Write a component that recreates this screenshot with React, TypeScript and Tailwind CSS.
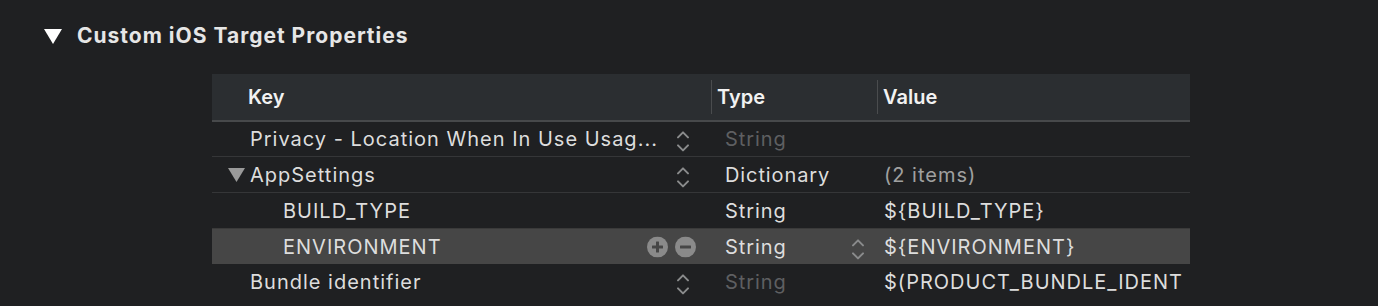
import React from "react";

const font = { fontFamily: "Inter, 'Noto Sans', sans-serif" };

function Stepper({ className = "" }: { className?: string }) {
  return (
    <svg width="14" height="24" viewBox="0 0 14 24" className={className}>
      <path d="M2 8 L7 3 L12 8" fill="none" stroke="#8a8b8c" strokeWidth="2" strokeLinecap="round" strokeLinejoin="round" />
      <path d="M2 16 L7 21 L12 16" fill="none" stroke="#8a8b8c" strokeWidth="2" strokeLinecap="round" strokeLinejoin="round" />
    </svg>
  );
}

function PlusMinus() {
  return (
    <div className="flex items-center gap-[7px]">
      <svg width="21" height="21" viewBox="0 0 21 21">
        <circle cx="10.5" cy="10.5" r="10.5" fill="#8a8a8a" />
        <rect x="5" y="9" width="11" height="3" rx="0.5" fill="#464646" />
        <rect x="9" y="5" width="3" height="11" rx="0.5" fill="#464646" />
      </svg>
      <svg width="21" height="21" viewBox="0 0 21 21">
        <circle cx="10.5" cy="10.5" r="10.5" fill="#8a8a8a" />
        <rect x="5" y="9" width="11" height="3" rx="0.5" fill="#464646" />
      </svg>
    </div>
  );
}

type RowProps = {
  keyText: string;
  indent?: boolean;
  triangle?: boolean;
  keyStepper?: boolean;
  plusMinus?: boolean;
  type: string;
  typeDim?: boolean;
  typeStepper?: boolean;
  value?: string;
  valueDim?: boolean;
  selected?: boolean;
  h: string;
  border?: boolean;
};

function Row(p: RowProps) {
  return (
    <div
      className={`flex ${p.h} ${p.border ? "border-b border-[#353638]" : ""} ${
        p.selected ? "bg-[#464646] border-t border-[#3a3a3a]" : ""
      }`}
    >
      <div className="w-[499px] flex items-center relative">
        {p.triangle && (
          <svg width="17" height="14" viewBox="0 0 17 14" className="absolute left-[16px] top-1/2 -translate-y-1/2">
            <path d="M0 0 L17 0 L8.5 14 Z" fill="#9a9a9a" />
          </svg>
        )}
        <span
          className={`${p.indent ? "pl-[71px]" : "pl-[38px]"} text-[20px] tracking-[1px] text-[#dddddd] whitespace-nowrap flex-1`}
        >
          {p.keyText}
        </span>
        {p.plusMinus && (
          <div className="absolute left-[435px] top-1/2 -translate-y-1/2">
            <PlusMinus />
          </div>
        )}
        {p.keyStepper && (
          <div className="absolute left-[464px] top-1/2 -translate-y-[40%]">
            <Stepper />
          </div>
        )}
      </div>
      <div className="w-[166px] flex items-center relative">
        <span className={`pl-[14px] text-[20px] tracking-[0.9px] ${p.typeDim ? "text-[#5e5f61]" : "text-[#dddddd]"}`}>
          {p.type}
        </span>
        {p.typeStepper && (
          <div className="absolute left-[140px] top-1/2 -translate-y-[40%]">
            <Stepper />
          </div>
        )}
      </div>
      <div className="w-[313px] flex items-center overflow-hidden">
        <span
          className={`pl-[7px] text-[20px] tracking-[1px] whitespace-nowrap ${
            p.valueDim ? "text-[#a0a0a0]" : "text-[#dddddd]"
          }`}
        >
          {p.value}
        </span>
      </div>
    </div>
  );
}

export default function App() {
  return (
    <div className="w-[1378px] h-[306px] bg-[#1f2022] overflow-hidden" style={font}>
      <div className="flex items-center pl-[44px] pt-[23px] h-[49px]">
        <svg width="18" height="15" viewBox="0 0 18 15">
          <path d="M0 0 L18 0 L9 15 Z" fill="#ffffff" />
        </svg>
        <span className="ml-[15px] text-[21px] tracking-[1px] font-bold text-[#e6e6e6]">
          Custom iOS Target Properties
        </span>
      </div>
      <div className="ml-[212px] mt-[25px] w-[978px]">
        <div className="flex h-[48px] bg-[#2b2e31] border-b-2 border-[#47494b]">
          <div className="w-[499px] flex items-center">
            <span className="pl-[36px] text-[20px] font-semibold text-[#f2f2f2]">Key</span>
          </div>
          <div className="w-[166px] flex items-center border-l border-[#4a4c4e] my-[6px]">
            <span className="pl-[5px] text-[20px] font-semibold text-[#f2f2f2]">Type</span>
          </div>
          <div className="w-[313px] flex items-center border-l border-[#4a4c4e] my-[6px]">
            <span className="pl-[5px] text-[20px] font-semibold text-[#f2f2f2]">Value</span>
          </div>
        </div>
        <Row h="h-[35px]" border keyText="Privacy - Location When In Use Usag..." keyStepper type="String" typeDim />
        <Row h="h-[36px]" border keyText="AppSettings" triangle keyStepper type="Dictionary" value="(2 items)" valueDim />
        <Row h="h-[35px]" indent keyText="BUILD_TYPE" type="String" value="${BUILD_TYPE}" />
        <Row h="h-[36px]" indent selected plusMinus keyText="ENVIRONMENT" type="String" typeStepper value="${ENVIRONMENT}" />
        <Row h="h-[36px]" keyText="Bundle identifier" keyStepper type="String" typeDim value="$(PRODUCT_BUNDLE_IDENT" />
      </div>
    </div>
  );
}
